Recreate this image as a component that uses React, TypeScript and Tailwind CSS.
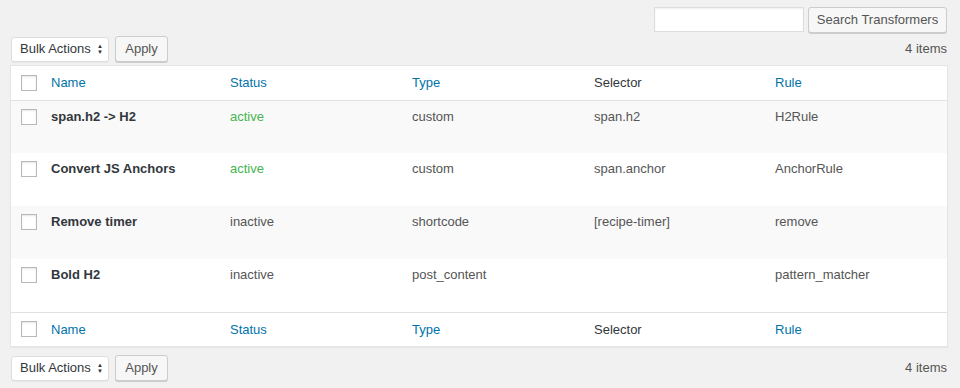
import React from "react";

type Row = {
  name: string;
  status: "active" | "inactive";
  type: string;
  selector: string;
  rule: string;
};

const rows: Row[] = [
  { name: "span.h2 -> H2", status: "active", type: "custom", selector: "span.h2", rule: "H2Rule" },
  { name: "Convert JS Anchors", status: "active", type: "custom", selector: "span.anchor", rule: "AnchorRule" },
  { name: "Remove timer", status: "inactive", type: "shortcode", selector: "[recipe-timer]", rule: "remove" },
  { name: "Bold H2", status: "inactive", type: "post_content", selector: "", rule: "pattern_matcher" },
];

const Checkbox = () => (
  <span className="block w-4 h-4 border border-[#b4b9be] bg-white shadow-[inset_0_1px_2px_rgba(0,0,0,0.1)]" />
);

const BulkBar = () => (
  <div className="flex items-center justify-between h-[26px]">
    <div className="flex items-center gap-[6px] pl-[1px]">
      <div className="flex items-center justify-between w-[98px] h-[25px] bg-white border border-[#ddd] rounded-[3px] pl-[8px] pr-[5px] text-[#32373c] shadow-[0_1px_1px_rgba(0,0,0,0.04)]">
        <span>Bulk Actions</span>
        <span className="flex flex-col leading-none text-[6px] text-[#333]">
          <span>▲</span>
          <span>▼</span>
        </span>
      </div>
      <button className="w-[53px] h-[26px] bg-[#f7f7f7] border border-[#ccc] rounded-[3px] text-[#555] shadow-[0_1px_0_#ccc]">
        Apply
      </button>
    </div>
    <span className="text-[#555]">4 items</span>
  </div>
);

const HeaderRow = ({ border }: { border: "top" | "bottom" }) => (
  <tr className={border === "bottom" ? "border-b border-[#e1e1e1] h-[34px]" : "border-t border-[#e1e1e1] h-[34px]"}>
    <td className="pl-[10px] align-middle">
      <Checkbox />
    </td>
    <td className="px-[10px] text-[#0073aa]">Name</td>
    <td className="px-[10px] text-[#0073aa]">Status</td>
    <td className="px-[10px] text-[#0073aa]">Type</td>
    <td className="px-[10px] text-[#32373c]">Selector</td>
    <td className="px-[10px] text-[#0073aa]">Rule</td>
  </tr>
);

export default function App() {
  return (
    <div className="w-[960px] h-[388px] bg-[#f1f1f1] px-[10px] pt-[7px] text-[13px] font-['Liberation_Sans',Arial,sans-serif] overflow-hidden">
      <div className="flex justify-end gap-[4px] pr-[3px] h-[26px]">
        <div className="w-[150px] h-[25px] bg-white border border-[#ddd] shadow-[inset_0_1px_2px_rgba(0,0,0,0.07)]" />
        <button className="w-[139px] h-[26px] bg-[#f7f7f7] border border-[#ccc] rounded-[3px] text-[#555] shadow-[0_1px_0_#ccc]">
          Search Transformers
        </button>
      </div>
      <div className="mt-[3px] pr-[3px]">
        <BulkBar />
      </div>
      <div className="mt-[3px] w-[938px] bg-white border border-[#e5e5e5] shadow-[0_1px_1px_rgba(0,0,0,0.04)]">
        <table className="w-full table-fixed border-collapse">
          <colgroup>
            <col className="w-[30px]" />
            <col className="w-[179px]" />
            <col className="w-[182px]" />
            <col className="w-[182px]" />
            <col className="w-[181px]" />
            <col />
          </colgroup>
          <thead>
            <HeaderRow border="bottom" />
          </thead>
          <tbody>
            {rows.map((r, i) => (
              <tr key={r.name} className={i % 2 === 0 ? "bg-[#f9f9f9] h-[53px]" : "bg-white h-[53px]"}>
                <td className="pl-[10px] align-top pt-[8px]">
                  <Checkbox />
                </td>
                <td className="px-[10px] align-top pt-[6px] font-bold text-[#32373c]">{r.name}</td>
                <td
                  className={
                    r.status === "active"
                      ? "px-[10px] align-top pt-[6px] text-[#46b450]"
                      : "px-[10px] align-top pt-[6px] text-[#555]"
                  }
                >
                  {r.status}
                </td>
                <td className="px-[10px] align-top pt-[6px] text-[#555]">{r.type}</td>
                <td className="px-[10px] align-top pt-[6px] text-[#555]">{r.selector}</td>
                <td className="px-[10px] align-top pt-[6px] text-[#555]">{r.rule}</td>
              </tr>
            ))}
          </tbody>
          <tfoot>
            <HeaderRow border="top" />
          </tfoot>
        </table>
      </div>
      <div className="mt-[8px] pr-[3px]">
        <BulkBar />
      </div>
    </div>
  );
}
